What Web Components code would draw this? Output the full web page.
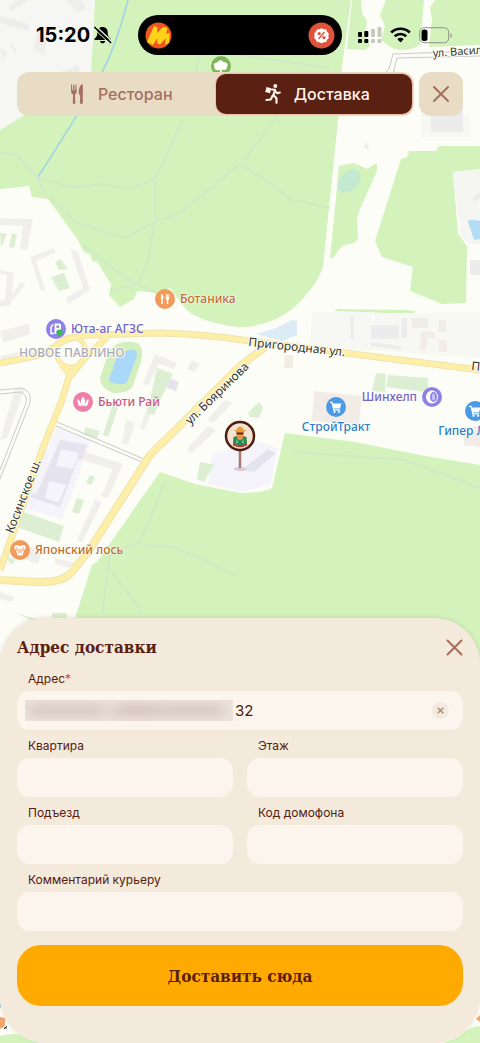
<!DOCTYPE html>
<html lang="ru">
<head>
<meta charset="utf-8">
<meta name="viewport" content="width=device-width, initial-scale=1">
<title>Адрес доставки</title>
<style>
  html, body {
    margin: 0;
    min-height: 100%;
  }
  body {
    background: #fcfdf6;
    color: #55200f;
    font-family: Inter, "Liberation Sans", sans-serif;
    --sheet: #f4eadb;
    --field: #fcf5ee;
    --brown: #5a2012;
    --muted: #a56f5e;
    --sand: #e9dcc5;
    --accent: #ffaa00;
    --slab: "DejaVu Serif Condensed", "DejaVu Serif", serif;
  }
</style>
</head>
<body>

<template id="screenTemplate">
  <style>
    :host {
      display: flex;
      flex-direction: column;
      position: relative;
      min-height: 100vh;
      overflow: hidden;
    }
    ::slotted(delivery-sheet) {
      margin-top: auto;
    }
  </style>
  <slot></slot>
</template>

<template id="statusTemplate">
  <style>
    :host {
      display: grid;
      grid-template-columns: 1fr 204px 1fr;
      align-items: center;
      height: 40px;
      padding-top: 15px;
      position: relative;
      color: #000;
    }
    .left {
      display: flex;
      align-items: center;
      gap: 4px;
      padding-left: 36px;
      font-size: 20px;
      font-weight: 700;
      line-height: 24px;
    }
    .island {
      display: flex;
      align-items: center;
      justify-content: space-between;
      height: 40px;
      padding: 0 7px;
      box-sizing: border-box;
      border-radius: 20px;
      background: #000;
    }
    .right {
      display: flex;
      align-items: center;
      gap: 8px;
      padding-left: 16px;
    }
    svg {
      display: block;
      flex: none;
    }
  </style>
  <div class="left">
    <span>15:20</span>
    <svg width="18" height="18" viewBox="0 0 18 18">
      <path d="M8.500 1c3.500 0 5.200 2.500 5.200 5.200 0 3.500.8 5 2.800 6.300.7.600.4 1.500-.5 1.500H1.200c-1 0-1.200-.9-.5-1.500C2.500 11.200 3.300 9.700 3.300 6.200 3.300 3.500 5 1 8.500 1z" />
      <path d="M6 15h5.200c-.2 1.400-1.300 2.300-2.600 2.300S6.200 16.400 6 15z" />
      <path d="M2.500.8l15 14.200" stroke="#e4f3d6" stroke-width="1.500" />
      <path d="M.8 1.500l15.800 15" stroke="#000" stroke-width="1.700" stroke-linecap="round" />
      <path d="M0 2.800l15 14.200" stroke="#e4f3d6" stroke-width="1" />
    </svg>
  </div>
  <div class="island">
    <svg width="27" height="27" viewBox="0 0 27 27">
      <circle cx="13.500" cy="13.500" r="13" fill="#ef5423" />
      <path d="M2 20L9 4l3.500 1.500-.5 5.500L18 5l4.500 1-1.300 6 3.500-1.200L24 21l-4 1.500 1-6.500-6 6.500-3-1.500.5-5L8 23z" fill="#ffd31a" />
    </svg>
    <svg width="27" height="27" viewBox="0 0 27 27">
      <circle cx="13.500" cy="13.500" r="13" fill="#e0523c" />
      <path d="M13.500 6.200l2.200 1 2.400.3 1 2.200 1.700 1.700-.4 2.300.4 2.300-1.700 1.700-1 2.200-2.400.3-2.200 1-2.200-1-2.400-.3-1-2.200-1.700-1.700.4-2.300-.4-2.300 1.700-1.700 1-2.200 2.400-.3z" fill="#fff" />
      <path d="M11 16.500l5-6" stroke="#e0523c" stroke-width="1.500" stroke-linecap="round" />
      <circle cx="11.200" cy="11.600" r="1.600" fill="#e0523c" />
      <circle cx="15.900" cy="15.600" r="1.600" fill="#e0523c" />
    </svg>
  </div>
  <div class="right">
    <svg width="24" height="18" viewBox="0 0 24 18">
      <g>
        <rect y="6" width="4" height="5" rx="1" />
        <rect y="13" width="4" height="4" rx="1" />
        <rect x="6.300" y="5" width="4" height="6" rx="1" />
        <rect x="6.300" y="13" width="4" height="4" rx="1" />
      </g>
      <g fill="#c3c9bd">
        <rect x="13" y="3" width="4" height="8" rx="1" />
        <rect x="13" y="13" width="4" height="4" rx="1" />
        <rect x="19.500" y="1" width="4" height="10" rx="1" />
        <rect x="19.500" y="13" width="4" height="4" rx="1" />
      </g>
    </svg>
    <svg width="21" height="16" viewBox="0 0 21 16" fill="none" stroke="#000" stroke-width="2.700">
      <path d="M1.200 5.500c5.300-5 13.300-5 18.600 0" />
      <path d="M4.700 9.300c3.400-3.100 8.200-3.100 11.600 0" />
      <path d="M7.300 12c1.900-1.600 4.500-1.600 6.400 0l-3.200 3.400z" fill="#000" stroke="none" />
    </svg>
    <svg width="34" height="17" viewBox="0 0 34 17">
      <rect x=".7" y=".7" width="29" height="15" rx="4.500" fill="none" stroke="#8d9288" />
      <rect x="2.500" y="2.500" width="6" height="11.500" rx="2.500" />
      <path d="M31.500 6v5c1.700-.8 1.700-4.200 0-5z" fill="#8d9288" />
    </svg>
  </div>
</template>

<template id="modeTemplate">
  <style>
    :host {
      display: flex;
      gap: 5px;
      margin-top: 17px;
      padding: 0 17px;
      position: relative;
    }
    .tabs {
      flex: 1;
      display: grid;
      grid-template-columns: 1fr 1fr;
      height: 44px;
      padding: 2px;
      box-sizing: border-box;
      border-radius: 12px;
      background: var(--sand);
    }
    button {
      display: flex;
      align-items: center;
      justify-content: center;
      gap: 12px;
      margin: 0;
      padding: 0;
      border: 0;
      border-radius: 10px;
      background: none;
      color: var(--muted);
      font: 500 16px/20px Inter, "Liberation Sans", sans-serif;
      cursor: pointer;
    }
    .tabs button {
      padding-left: 6px;
    }
    button[aria-selected="true"] {
      background: var(--brown);
      color: #fff4ea;
      box-shadow: 0 0 0 1px #eebfa6;
    }
    .close {
      width: 44px;
      border-radius: 12px;
      background: var(--sand);
    }
    svg {
      display: block;
    }
  </style>
  <div class="tabs" role="tablist">
    <button type="button" role="tab" aria-selected="false">
      <svg width="18" height="22" viewBox="0 0 18 22" fill="currentColor">
        <path d="M3 1.500h1l.3 6h.8l.2-6h1l.2 6h.7l.4-6h.8l.3 7c0 1.700-.8 2.500-1.700 3l.3 8.500c-.3 1.200-2.200 1.200-2.500 0l.3-8.500c-1.200-.5-2-1.300-2-3z" />
        <path d="M14.500 1c-2.500 1-3.700 4.500-3.800 8 0 2 .7 3 1.500 3.300l-.3 7.700c.3 1.200 2.600 1.200 2.900 0V1z" />
      </svg>
      <span>Ресторан</span>
    </button>
    <button type="button" role="tab" aria-selected="true">
      <svg width="18" height="22" viewBox="0 0 18 22">
        <circle cx="11.300" cy="3" r="2" fill="currentColor" />
        <path d="M2.500 4l4.700 1.300-1.200 5L1.200 9z" fill="currentColor" />
        <path d="M8 6.500l3 .3-1.500 5.500 3 3v4.500M9 12l-2.300 4.500-4.200.5M10.700 7.500l2.600 2.700 2.500-.7" fill="none" stroke="currentColor" stroke-width="2.200" stroke-linecap="round" stroke-linejoin="round" />
      </svg>
      <span>Доставка</span>
    </button>
  </div>
  <button class="close" type="button" aria-label="Закрыть">
    <svg width="16" height="16" viewBox="0 0 16 16" stroke="currentColor" stroke-width="2" stroke-linecap="round"><path d="M1 1l14 14M15 1L1 15" /></svg>
  </button>
</template>

<template id="mapTemplate">
  <style>
    :host {
      display: block;
      position: absolute;
      inset: 0;
      overflow: hidden;
      font-family: "Noto Sans", "Open Sans", sans-serif;
    }
    /* free canvas, kept centred under the screen */
    .canvas {
      position: absolute;
      top: 0;
      left: calc(50% - 240px);
      width: 480px;
      height: 100%;
    }
    svg {
      display: block;
      overflow: visible;
    }
    text {
      font-size: 12px;
      fill: #343434;
      stroke: #fffef2;
      stroke-width: 2px;
      stroke-linejoin: round;
      paint-order: stroke;
    }
    .minor {
      font-size: 11px;
    }
    .district {
      font-weight: 500;
      fill: #a9a9bd;
    }
  </style>
  <div class="canvas">
    <svg width="480" height="1043" viewBox="0 0 480 1043">
      <!-- blocks -->
      <path d="M0 0H95L91 80 25 115 0 130z" fill="#f6f6f4" />
      <g fill="#ededeb">
        <path d="M9 5l18-8 4 2-20 12zM0 16l30 8-2 7-28-8zM38 30l10 5-4 20-11-6zM65 0h16l5 9-8 3zM0 48l7 5-5 6zM12 44l5 9-2 1-5-9zM60 72l18-7 2 8z" />
      </g>

      <!-- woods -->
      <g fill="#d3f2bc">
        <path d="M95 0H351L342 67 338 120 323 267Q318 282 305 296C292 313 268 327 240 327 215 325 190 316 184 307L170 288 158 293 137 291 134 299 120 307 109 295 111 284 97 262 92 261 90 254 84 252 78 240 48 199 32 197 29 186 0 189V130L25 115 91 78z" />
        <path d="M352 0h9l1 13 5 8-2 12 5 13-5 4-18-1z" />
        <path d="M386 0h38l-2 22-2 23q-14 8-28 3l-11-8 4-14-5-11z" />
        <path d="M435 0h45v45l-51 2 3-28-2-11z" />
        <path d="M339 166l15-3 13 6 10-6v8l-17 38-3 10 1 20-4 4-12 3-8 11-4 2z" />
        <path d="M401 159l6-2 2-6h27l3-5h41v23l-27 3 5 62 9 12-1 57-24 1-32-13 3-24-31-10-7-16z" />
        <path d="M337 309l68 1 10 1-2 3-78-3z" />
        <path d="M160 472l35 12 45 9q24 0 32-5l13-55 70 9 70 14 55 9V1043H72V632L75 618 92 565 97 562z" />
      </g>
      <path d="M453 172l27-3v75h-11l-8-9z" fill="#f5f5f2" />

      <!-- forest tracks -->
      <g fill="none" stroke="#d1e9c6" stroke-width="2">
        <path d="M0 153l16 1 20 22 10 18 30 28 37 13 14 2 27-15 25-8 60-49" />
        <path d="M36 178l40 10 25-4 28 5 26-10 20-42 8-17M155 178v42l-7 40-10 25M83 245l28 22 24 17 22 9M111 290l26-5" />
        <path d="M240 164l25 15 25 20 40 9M243 162l35-48M196 72l8-50M240 55l90 13" />
        <path d="M165 482l-25 60-30 12-8 60M108 567l35 46M145 545l30 2 65 30M295 452l110 8 75 28" />
      </g>

      <!-- water -->
      <path d="M128 0Q115 50 98 80T38 177" fill="none" stroke="#9dd1e5" stroke-width="1.500" />
      <path d="M340 179c6-9 13-12 18-8 5 6 2 14-4 18-6 3-12 6-15 1-2-4-2-8 1-11z" fill="#c4e9d2" />
      <path d="M468 222q0-3 6-2l6 1v18l-6 1z" fill="#b2ddf5" />
      <path d="M256 334l20-6 16-8 5 1v14l-14 6z" fill="#dcebf4" />
      <path d="M117 344q12-5 22 0 5 5 2 18l-9 26q-5 5-19 5-13-5-13-15l9-27z" fill="#d2efbd" />
      <path d="M113 369q2-14 13-18 11-4 11 5l-10 26q-3 4-17 0-2-4 3-13z" fill="#a9d8f8" />

      <!-- yards -->
      <g fill="#f7f7f3">
        <path d="M312 312h60v38h-62zM375 313h105v45l-110-8zM430 115h40v22h-49V98z" />
      </g>
      <path d="M57 428l35 12-30 79-43-12z" fill="#f5f4fb" />
      <path d="M212 455l42-15 23 8-6 36-30 8-33-8z" fill="#f4f4fa" />
      <g fill="#e5e4ee">
        <path d="M60 440l27 5-5 15-4-1-18 48-30-10 3-3 4-1z" />
        <path d="M244 468l24-19 8 4-22 19-8-1z" />
        <path d="M164 376l15 6-3 9-14-5z" />
      </g>
      <path d="M61 449l18 4-6 16-17-3zM49 481l17 4-7 18-14-5z" fill="#f5f4fb" />

      <!-- houses -->
      <g fill="#f1efeb">
        <path d="M0 218l33 1-6 31-7-1 3-23-23-1zM30 257l24-9 1 5-19 8 9 28-4 2zM70 249l8 3 12 38-22 14-2-6 17-10zM0 270l14 3-3 32-12 2v-6l6-2 2-24-7-1z" />
        <path d="M155 354l22 9-3 6-15-5-11 22-5-2zM150 400h7l-13 30-4-2zM126 420l9 3-7 22-6-2zM192 360l8 4-6 8-7-3z" />
        <path d="M0 331l28-7 3 10-28 9zM0 356l35-8 1 4-34 8zM15 390l10-2-18 50-7 2zM10 297l11-15 4 3-12 15z" />
        <path d="M85 452l38 12-15 34-7-2 12-27-31-9zM95 500l7 2-20 40-5-2zM22 545l20 5-4 14-14-5zM55 558l20 5-3 5-17-4z" />
        <path d="M208 426l8 4-24 23-5-4zM225 400l8 3-20 20-6-3zM0 592l15 5-4 5-11-3z" />
      </g>
      <g fill="#ececec">
        <path d="M431 98h32v34h-32zM364 147l2-6 3 9zM473 197l7-5v7l-6 3zM470 260h10v15h-10zM371 325h28v14h-28zM371 342l30 4v4l-30-4zM350 317h4v22h-3zM402 318h5v20h-6z" />
      </g>
      <g fill="#f2ece7">
        <path d="M314 391l48 5-3 28-47-3zM411 318h17v10h-16zM421 331l14 1v6h-7l-3 13-5-1zM439 320h7v12h-8zM439 340h8v12h-8zM285 355h8v13h-9zM464 430l16-5v22l-16-2z" />
      </g>

      <!-- small lawns -->
      <g fill="#dcefd2">
        <path d="M376 373l10 1-1 18-13-1zM388 375l40 3v13l-2 1-40-5zM12 233l5 2-3 13-5-1zM0 233l7 1-6 14zM55 262l6-3 7 10-9 1zM51 277l13-4 6 15-11 3z" />
        <path d="M20 511l44 15-5 16-42-15zM77 498l7 2-5 14-7-2zM90 475l5 2-4 8-5-2zM85 427l15 4-3 7-13-3zM112 406l6 2-10 29-5-2zM248 413l11-11 4 5-4 11-9-1zM200 462l14 3-10 17-7-3zM6 556l10 4-5 5z" />
        <path d="M157 368l16 6-13 26-6 15-7-2zM52 613h15v12H52zM16 613l20 6-1 3z" />
      </g>

      <!-- lanes -->
      <g fill="none" stroke="#c9cacb" stroke-width="1">
        <path d="M0 390l22-2q10 3 8 15L0 479M0 394l20-2q8 2 6 11L0 470M56 426l86 36M57 422l87 37" />
        <path d="M480 51l-87 3-4 15-4 4M480 56l-83 2-4 16" />
      </g>

      <!-- main roads -->
      <g fill="none" stroke-linejoin="round">
        <g stroke="#f0e3b0" stroke-width="8">
          <path d="M56 352a15 15 0 1 0 30 0a15 15 0 1 0-30 0" stroke-width="5" />
          <path d="M0 363L40 355 56 346Q65 337 90 335L160 333Q205 334 250 341L480 370M62 365l9 10 14-17 22-21M71 370L62 400 44 445 0 570" stroke-width="7" />
          <path d="M265 347L240 366 150 455 90 549 72 572Q62 583 38 582L0 580" />
        </g>
        <g stroke="#fdeea8" stroke-width="6">
          <path d="M56 352a15 15 0 1 0 30 0a15 15 0 1 0-30 0" stroke-width="3" />
          <path d="M0 363L40 355 56 346Q65 337 90 335L160 333Q205 334 250 341L480 370M62 365l9 10 14-17 22-21M71 370L62 400 44 445 0 570" stroke-width="5" />
          <path d="M265 347L240 366 150 455 90 549 72 572Q62 583 38 582L0 580" />
        </g>
      </g>

      <!-- lower edge, seen round the corners of the sheet -->
      <path d="M0 990h480v38l-36 15H0z" fill="#fcfdf6" />
      <path d="M0 1002l2 4-2 2z" fill="#9ccbe8" />
      <path d="M0 1017l5 1v8l-5 3zM480 1015l-4 4 4 3z" fill="#f3a66d" />
      <path d="M4 1028h3M4 1029l3-3" fill="none" stroke="#343434" />
      <path d="M0 1036q14-4 26 0l14 7H0zM454 1043q10-15 24-17l2 1v16z" fill="#d3f2bc" />

      <text class="district" x="19" y="357">НОВОЕ ПАВЛИНО</text>
      <text class="minor" transform="translate(433 57) rotate(-4)">ул. Васил</text>
      <text transform="translate(190 425) rotate(-44)">ул. Бояринова</text>
      <text transform="translate(248 346) rotate(6)">Пригородная ул.</text>
      <text transform="translate(471 370) rotate(6)">П</text>
      <text transform="translate(13 534) rotate(-69)">Косинское ш.</text>

      <!-- park mark -->
      <circle cx="221" cy="66" r="10" fill="#7fb957" />
      <path d="M220 70c-4 1-6-1-5.500-3-2-3 1-5 3-4.500 1-3 5-3 6 0 3-1 5 2 3.500 4.500 0 3-3 3.500-5 2.500l-.3 5h-1.500z" fill="#fff" />
    </svg>
    <slot></slot>
  </div>
</template>

<template id="poiTemplate">
  <style>
    /* the host box is the round mark; its name hangs beside it */
    :host {
      display: block;
      position: absolute;
      width: 20px;
      height: 20px;
      margin: -10px;
      color: var(--tone);
      font-size: 12px;
      font-weight: 500;
      line-height: 16px;
      white-space: nowrap;
    }
    svg {
      display: block;
      width: 20px;
      height: 20px;
    }
    .name {
      position: absolute;
      top: 2px;
      left: 25px;
      text-shadow: 0 0 2px #fff, 0 0 2px #fff;
    }
    :host([side="left"]) .name {
      left: auto;
      right: 25px;
    }
    :host([side="below"]) .name {
      top: 22px;
      left: 50%;
      transform: translateX(-50%);
    }
  </style>
  <svg viewBox="0 0 20 20"></svg>
  <span class="name"><slot></slot></span>
</template>

<template id="pinTemplate">
  <style>
    :host {
      display: block;
      position: absolute;
      width: 32px;
      margin-left: -16px;
    }
    svg {
      display: block;
    }
  </style>
  <svg width="32" height="52" viewBox="0 0 32 52">
    <ellipse cx="16" cy="49" rx="6" ry="2" fill="#d9ccd0" />
    <path d="M16 30v17" stroke="#a77770" stroke-width="2.500" stroke-linecap="round" />
    <circle cx="16" cy="16" r="14" fill="#f4e4cf" stroke="#4f1c12" stroke-width="2.500" />
    <path d="M9 24l.5-7 3.500-1 3 2 3-2 3.500 1 .5 7-7 2z" fill="#228a57" />
    <path d="M9 23.500q7 3 14 0v2q-7 3.500-14 0z" fill="#c9372b" />
    <path d="M12.500 11h7v5q-.5 4-3.500 4t-3.500-4z" fill="#ee9147" />
    <path d="M13 8.500q3-4 6 0l1 2.500h-8z" fill="#e79d3c" />
    <path d="M10.500 9.500q5.500 3 11 0v1.500q-5.500 3-11 0z" fill="#e79d3c" />
    <path d="M12.500 12.500h7v1.500l-2 .8-1.500-.8-1.500.8-2-.8z" fill="#5a2917" />
    <path d="M12 19l3 3-3 2zM20 19l-3 3 3 2z" fill="#62b87b" />
  </svg>
</template>

<template id="fieldTemplate">
  <style>
    :host {
      display: block;
      min-width: 0;
    }
    label {
      display: block;
      padding: 4px 11px 0;
      font-size: 12px;
      line-height: 24px;
    }
    .star {
      color: #d8422d;
    }
    .box {
      display: flex;
      align-items: center;
      height: 39px;
      padding: 0 14px 0 8px;
      box-sizing: border-box;
      border-radius: 13px;
      background: var(--field);
    }
    input {
      flex: 1;
      min-width: 0;
      height: 100%;
      margin: 0;
      padding: 0 2px;
      border: 0;
      outline: none;
      background: none;
      color: #4a2013;
      font: 400 15px/20px Inter, "Liberation Sans", sans-serif;
    }
  </style>
  <label for="input"></label>
  <div class="box">
    <slot name="before"></slot>
    <input id="input" type="text" autocomplete="off">
    <slot name="after"></slot>
  </div>
</template>

<template id="hiddenTemplate">
  <style>
    :host {
      display: block;
      width: 208px;
      height: 21px;
      overflow: hidden;
      background: #eee4dd;
    }
    .smudge {
      height: 11px;
      margin: 5px 4px;
      background: linear-gradient(90deg, #d2c4bc 0 34%, #e0d4cc 38% 41%, #cfc0b8 46% 62%, #d6c9c1 66%, #d1c3bb 70% 94%, #e6dcd5);
      filter: blur(6px);
    }
  </style>
  <div class="smudge"></div>
</template>

<template id="clearTemplate">
  <style>
    :host {
      display: block;
    }
    button {
      display: flex;
      align-items: center;
      justify-content: center;
      width: 17px;
      height: 17px;
      padding: 0;
      border: 0;
      border-radius: 50%;
      background: #f4eadd;
      color: #ab8c7e;
      cursor: pointer;
    }
  </style>
  <button type="button" aria-label="Очистить">
    <svg width="7" height="7" viewBox="0 0 7 7" stroke="currentColor" stroke-width="1.500"><path d="M.7.7l5.600 5.600M6.300.7L.7 6.300" /></svg>
  </button>
</template>

<template id="sheetTemplate">
  <style>
    :host {
      display: block;
      position: relative;
      padding: 17px 17px 37px;
      border-radius: 46px;
      background: var(--sheet);
      box-shadow: 0 -1px 4px rgba(90, 60, 30, 0.12);
    }
    header {
      display: flex;
      align-items: center;
      justify-content: space-between;
      padding-bottom: 4px;
    }
    h1 {
      margin: 0;
      color: var(--brown);
      font: 700 17px/24px var(--slab);
    }
    .close {
      display: flex;
      padding: 0;
      border: 0;
      background: none;
      color: var(--muted);
      cursor: pointer;
    }
    .fields {
      display: grid;
      grid-template-columns: 1fr 1fr;
      column-gap: 14px;
    }
    ::slotted([wide]) {
      grid-column: 1 / -1;
    }
    .submit {
      display: block;
      width: 100%;
      height: 61px;
      margin-top: 14px;
      border: 0;
      border-radius: 24px;
      background: var(--accent);
      color: var(--brown);
      font: 700 17px/24px var(--slab);
      cursor: pointer;
    }
  </style>
  <header>
    <h1><slot name="title"></slot></h1>
    <button class="close" type="button" aria-label="Закрыть">
      <svg width="17" height="17" viewBox="0 0 17 17" stroke="currentColor" stroke-width="2" stroke-linecap="round"><path d="M1.500 1.500l14 14M15.500 1.500l-14 14" /></svg>
    </button>
  </header>
  <div class="fields"><slot></slot></div>
  <button class="submit" type="button"><slot name="action"></slot></button>
</template>

<delivery-screen>
  <city-map>
    <map-poi x="165" y="299" icon="food">Ботаника</map-poi>
    <map-poi x="56" y="329" icon="fuel">Юта-аг АГЗС</map-poi>
    <map-poi x="83" y="402" icon="beauty">Бьюти Рай</map-poi>
    <map-poi x="20" y="550" icon="sushi">Японский лось</map-poi>
    <map-poi x="336" y="407" icon="cart" side="below">СтройТракт</map-poi>
    <map-poi x="432" y="397" icon="tyre" side="left">Шинхелп</map-poi>
    <map-poi x="475" y="411" icon="cart" side="below">Гипер Лента</map-poi>
    <map-pin x="240" y="420"></map-pin>
  </city-map>
  <status-bar></status-bar>
  <mode-switch></mode-switch>
  <delivery-sheet>
    <span slot="title">Адрес доставки</span>
    <form-field wide label="Адрес" required value="32">
      <hidden-text slot="before"></hidden-text>
      <clear-button slot="after"></clear-button>
    </form-field>
    <form-field label="Квартира"></form-field>
    <form-field label="Этаж"></form-field>
    <form-field label="Подъезд"></form-field>
    <form-field label="Код домофона"></form-field>
    <form-field wide label="Комментарий курьеру"></form-field>
    <span slot="action">Доставить сюда</span>
  </delivery-sheet>
</delivery-screen>

<script>
  (() => {
    class TemplateElement extends HTMLElement {
      constructor() {
        super();
        this.root = this.attachShadow({mode: 'open'});
        this.root.appendChild(document.querySelector(this.constructor.template).content.cloneNode(true));
      }
    }

    const poiIcons = {
      food: {
        mark: "#f29a5b",
        text: "#bf6f2e",
        glyph: '<path d="M6 5c1.500 0 2.500 1.500 2.500 4l-.8 1.500V15H6.300zM10.700 5h.8v3h.6V5h.8v3h.6V5h.8v4q0 1.500-1 2v4h-1.500v-4q-1.100-.5-1.100-2z"/>'
      },
      fuel: {
        mark: "#8f82e6",
        text: "#7164c9",
        glyph: '<path d="M8.500 4.500h5q1.500 0 1.500 1.500v4q0 1.500-1.500 1.500H10.500V15H8.500z"/><path d="M8 14.500H5V8l2-2.500" fill="none" stroke="#fff" stroke-width="1.500"/><path d="M10.500 6.500H13v2.500h-2.500z" fill="#8f82e6"/><circle cx="13.500" cy="13.500" r="3" fill="#38bb50"/>'
      },
      beauty: {
        mark: "#ee7fa8",
        text: "#c8567f",
        glyph: '<path d="M10 4.500q3 4 2 8l-2 1.500-2-1.500q-1-4 2-8zM4.500 7q2.500 1 3 5l1.500 2.500Q4 14.500 4.500 7zM15.500 7q-2.500 1-3 5L11 14.500q5 0 4.500-7.500z"/>'
      },
      sushi: {
        mark: "#f29a5b",
        text: "#bf6f2e",
        glyph: '<path d="M4.500 6q2.500-1.500 5 0h1q2.500-1.500 5 0v3.500h-11zM6 10.500h8l-1.500 5h-5z"/><path d="M6 8h2M12 8h2M8 12h4" stroke="#f29a5b"/>'
      },
      cart: {
        mark: "#4b9be4",
        text: "#2f7fc7",
        glyph: '<path d="M6.500 6.500h9l-1.500 5H7.500zM7.500 12.300h6.800v1.200H7.200z"/><path d="M4 5.300h2l2 8" fill="none" stroke="#fff" stroke-width="1.200"/><circle cx="8.500" cy="14.800" r="1.100"/><circle cx="13" cy="14.800" r="1.100"/>'
      },
      tyre: {
        mark: "#8f82e6",
        text: "#7164c9",
        glyph: '<ellipse cx="10" cy="10" rx="6" ry="6.500"/><ellipse cx="11.500" cy="10" rx="3.500" ry="5" fill="#8f82e6"/><ellipse cx="11.500" cy="10" rx="1.500" ry="3.500" fill="#c9c3f5"/>'
      }
    };

    customElements.define("delivery-screen", class extends TemplateElement {
      static template = "#screenTemplate";
    });

    customElements.define("status-bar", class extends TemplateElement {
      static template = "#statusTemplate";
    });

    customElements.define("city-map", class extends TemplateElement {
      static template = "#mapTemplate";
    });

    customElements.define("mode-switch", class extends TemplateElement {
      static template = "#modeTemplate";

      connectedCallback() {
        let tabs = this.root.querySelectorAll('[role="tab"]');
        tabs.forEach((tab) => {
          tab.addEventListener("click", () => {
            tabs.forEach((other) => other.setAttribute("aria-selected", other === tab));
          });
        });
      }
    });

    customElements.define("map-poi", class extends TemplateElement {
      static template = "#poiTemplate";

      connectedCallback() {
        let icon = poiIcons[this.getAttribute("icon")];
        this.style.left = this.getAttribute("x") + "px";
        this.style.top = this.getAttribute("y") + "px";
        this.style.setProperty("--tone", icon.text);
        this.root.querySelector("svg").innerHTML =
          `<circle cx="10" cy="10" r="10" fill="${icon.mark}"/><g fill="#fff">${icon.glyph}</g>`;
      }
    });

    customElements.define("map-pin", class extends TemplateElement {
      static template = "#pinTemplate";

      connectedCallback() {
        this.style.left = this.getAttribute("x") + "px";
        this.style.top = this.getAttribute("y") + "px";
      }
    });

    customElements.define("hidden-text", class extends TemplateElement {
      static template = "#hiddenTemplate";
    });

    customElements.define("clear-button", class extends TemplateElement {
      static template = "#clearTemplate";

      connectedCallback() {
        this.root.querySelector("button").addEventListener("click", () => {
          this.dispatchEvent(new CustomEvent("clear", {bubbles: true}));
        });
      }
    });

    customElements.define("form-field", class extends TemplateElement {
      static template = "#fieldTemplate";

      connectedCallback() {
        let label = this.root.querySelector("label");
        this.input = this.root.querySelector("input");
        label.textContent = this.getAttribute("label");
        if(this.hasAttribute("required")) {
          let star = document.createElement("span");
          star.className = "star";
          star.textContent = "*";
          label.appendChild(star);
          this.input.required = true;
        }
        this.input.value = this.getAttribute("value") || "";
        this.addEventListener("clear", () => {
          this.input.value = "";
          this.querySelector("hidden-text")?.remove();
        });
      }
    });

    customElements.define("delivery-sheet", class extends TemplateElement {
      static template = "#sheetTemplate";
    });
  })();
</script>
</body>
</html>
